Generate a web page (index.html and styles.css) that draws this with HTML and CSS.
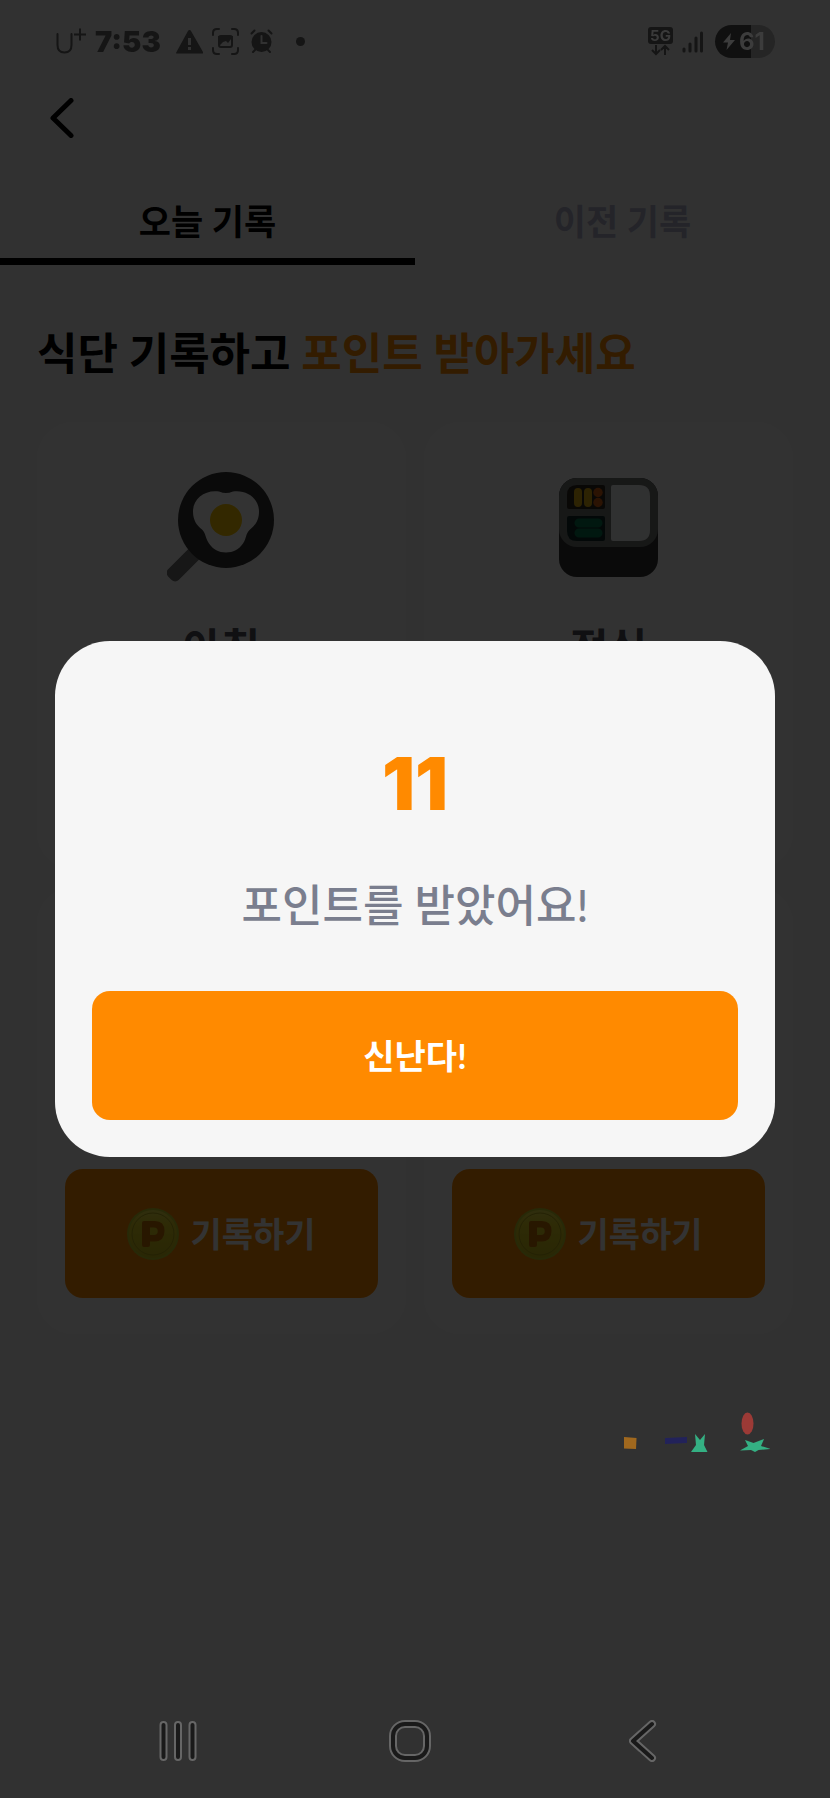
FILE: index.html
```html
<!DOCTYPE html>
<html lang="ko">
<head>
<meta charset="utf-8">
<meta name="viewport" content="width=device-width, initial-scale=1">
<title>식단 기록</title>
<link rel="stylesheet" href="styles.css">
</head>
<body>
<svg class="defs" width="0" height="0" aria-hidden="true">
  <defs>
    <linearGradient id="coin-fill" x1="0" y1="0" x2="0" y2="1">
      <stop offset="0" stop-color="#ece448"/>
      <stop offset="0.3" stop-color="#e4d420"/>
      <stop offset="1" stop-color="#ccc018"/>
    </linearGradient>
    <symbol id="coin" viewBox="0 0 52 52">
      <circle cx="26" cy="26" r="26" fill="#c4cc28"/>
      <circle cx="26" cy="26" r="24" fill="url(#coin-fill)"/>
      <circle cx="26" cy="26" r="21" fill="none" stroke="#b4a818" stroke-width="1"/>
      <path fill="#c87400" fill-rule="evenodd" d="M17 13h11q9.500 0 9.500 10T28 33.500h-5V37q0 2-2 2h-4q-2 0-2-2V15q0-2 2-2zM23 19.500v7.500h4a3.700 3.700 0 0 0 0-7.500z"/>
    </symbol>
  </defs>
</svg>

<div class="screen">
  <div class="status">
    <div class="status-side">
      <svg width="31" height="36" viewBox="0 0 31 36" fill="none" stroke="currentColor" aria-label="U+">
        <path stroke-width="2" stroke-linecap="round" d="M2.500 10v11q0 7.500 7 7.500t7-7.500V10"/>
        <path stroke-width="2" d="M19 10.500h12M25 4.500v12"/>
      </svg>
      <span class="clock">7:53</span>
      <svg width="27" height="24" viewBox="0 0 27 24" aria-hidden="true">
        <path fill="currentColor" d="M13.500 0q1 0 1.500 1l12 21q.5 1.500-1 1.500H1Q-.5 23.500.5 22L12 1q.5-1 1.500-1z"/>
        <path stroke="#313131" stroke-width="3" d="M13.500 8v7M13.500 17v3"/>
      </svg>
      <svg class="capture" width="27" height="27" viewBox="0 0 27 27" fill="none" stroke="currentColor" stroke-width="2" stroke-linecap="round" aria-hidden="true">
        <path d="M1 7V5q0-4 4-4h2M20 1h2q4 0 4 4v2M26 20v2q0 4-4 4h-2M7 26H5q-4 0-4-4v-2"/>
        <rect x="7" y="8" width="13" height="11" rx="2"/>
        <path fill="currentColor" stroke="none" d="M6 8h15v5l-2-2-3 4-2-2-3 1-3 3H6z"/>
      </svg>
      <svg class="alarm" width="23" height="25" viewBox="0 0 23 25" fill="none" stroke="currentColor" stroke-width="2" stroke-linecap="round" aria-hidden="true">
        <circle cx="11.500" cy="13" r="10" fill="currentColor" stroke="none"/>
        <path d="M1.500 4.500l3-3M21.500 4.500l-3-3M5 21l-2 2M18 21l2 2"/>
        <path d="M11.500 7v7h5" stroke="#313131"/>
      </svg>
      <svg width="9" height="9" viewBox="0 0 9 9" aria-hidden="true"><circle cx="4.500" cy="4.500" r="4.500" fill="currentColor"/></svg>
    </div>
    <div class="status-side">
      <svg width="25" height="30" viewBox="0 0 25 30" aria-label="5G">
        <rect width="25" height="17" rx="3" fill="currentColor"/>
        <text class="net" x="12.500" y="14" text-anchor="middle">5G</text>
        <path d="M8 18v9M4 23l4 4 4-4M17 28v-9M13 23l4-4 4 4" fill="none" stroke="currentColor" stroke-width="2"/>
      </svg>
      <svg class="signal" width="21" height="22" viewBox="0 0 21 22" stroke="currentColor" stroke-width="3" stroke-linecap="round" aria-hidden="true">
        <path d="M2 18v2M8 13v7M14 7v13M19.500 2v18"/>
      </svg>
      <div class="battery">
        <svg width="12" height="17" viewBox="0 0 12 17" aria-hidden="true"><path fill="currentColor" d="M8 0L0 9.500h5L3.500 17 12 7H7z"/></svg>
        <span>61</span>
      </div>
    </div>
  </div>

  <header class="topbar">
    <button class="back" type="button" aria-label="뒤로">
      <svg width="24" height="40" viewBox="0 0 24 40" fill="none" stroke="currentColor" stroke-width="5" stroke-linecap="round" stroke-linejoin="round"><path d="M21 2.500L3 20l18 17.500"/></svg>
    </button>
  </header>

  <nav class="tabs" role="tablist">
    <button class="tab tab-active" type="button" role="tab" aria-selected="true">오늘 기록</button>
    <button class="tab" type="button" role="tab" aria-selected="false">이전 기록</button>
  </nav>

  <main class="content">
    <h1 class="headline">식단 기록하고 <em>포인트 받아가세요</em></h1>
    <div class="meals">
      <section class="meal">
        <svg width="110" height="110" viewBox="1 0 110 110" aria-hidden="true">
          <rect x="-8" y="-7.500" width="45" height="15" rx="5" fill="#747474" transform="translate(30 80) rotate(135)"/>
          <circle cx="60" cy="48" r="48" fill="#343434"/>
          <path fill="#fff" d="M60 21q3 0 7-1.500c14-2 26 7 26 20 0 9-4 14-9 18-5 5-3 8-7 14-4 6-10 9-17 9s-13-3-17-9c-4-6-3-10-7-14-5-4-9-9-9-18 0-13 12-22 26-20q4 1.500 7 1.500z"/>
          <circle cx="60" cy="48" r="16" fill="#ffc800"/>
        </svg>
        <h2 class="meal-name">아침</h2>
        <button class="record" type="button"><svg width="52" height="52" aria-hidden="true"><use href="#coin"/></svg>기록하기</button>
      </section>
      <section class="meal">
        <svg width="110" height="110" viewBox="1 0 110 110" aria-hidden="true">
          <rect x="6" y="6" width="99" height="99" rx="18" fill="#343434"/>
          <rect x="6" y="6" width="99" height="69" rx="18" fill="#747776"/>
          <path fill="#302820" d="M24 13h26q2 0 2 2v20q0 2-2 2H16q-2 0-2-2V23q0-10 10-10z"/>
          <path fill="#102c28" d="M16 44h34q2 0 2 2v21q0 2-2 2H24q-10 0-10-10V46q0-2 2-2z"/>
          <path fill="#f0f2f2" d="M60 13h26q11 0 11 11v34q0 11-11 11H60q-2 0-2-2V15q0-2 2-2z"/>
          <path stroke="#e0b010" stroke-width="8" stroke-linecap="round" d="M25 20v11M35 20v11"/>
          <circle cx="45" cy="20.500" r="4.700" fill="#d86010"/>
          <circle cx="45" cy="30.500" r="4.700" fill="#d86010"/>
          <path stroke="#087850" stroke-width="9" stroke-linecap="round" d="M26 51h19M26 61h19"/>
        </svg>
        <h2 class="meal-name">점심</h2>
        <button class="record" type="button"><svg width="52" height="52" aria-hidden="true"><use href="#coin"/></svg>기록하기</button>
      </section>
      <section class="meal">
        <button class="record" type="button"><svg width="52" height="52" aria-hidden="true"><use href="#coin"/></svg>기록하기</button>
      </section>
      <section class="meal">
        <button class="record" type="button"><svg width="52" height="52" aria-hidden="true"><use href="#coin"/></svg>기록하기</button>
      </section>
    </div>
  </main>

  <div class="sysnav">
    <button type="button" aria-label="최근 앱">
      <svg width="38" height="48" viewBox="0 0 38 48" fill="none" stroke-linecap="round">
        <path class="edge" d="M4.500 8v32M19 8v32M33.500 8v32"/><path class="core" d="M4.500 8v32M19 8v32M33.500 8v32"/>
      </svg>
    </button>
    <button type="button" aria-label="홈">
      <svg width="42" height="42" viewBox="0 0 42 42" fill="none">
        <rect class="edge" x="4" y="4" width="34" height="34" rx="12"/><rect class="core" x="4" y="4" width="34" height="34" rx="12"/>
      </svg>
    </button>
    <button type="button" aria-label="뒤로 가기">
      <svg width="28" height="42" viewBox="0 0 28 42" fill="none" stroke-linecap="round" stroke-linejoin="round">
        <path class="edge" d="M23 4L4 21l19 17"/><path class="core" d="M23 4L4 21l19 17"/>
      </svg>
    </button>
  </div>
</div>

<div class="scrim">
  <svg class="confetti" width="150" height="44" viewBox="620 1410 150 44" aria-hidden="true">
    <path fill="#a0681e" d="M624 1437l12.500 1-.5 11-12-.5z"/>
    <path fill="#22225a" d="M665 1438l22-1v6l-22 1z"/>
    <path fill="#34b083" d="M695 1434l5 6 5-6-1 11 3.500 7H691l5-7z"/>
    <path fill="#34b083" d="M745 1440l8.500 3 10.500-4-3 7 9.500 3-12 1-3.500 2-4-2-11 .5 8-4.500z"/>
    <ellipse cx="747.500" cy="1423.500" rx="6" ry="11" fill="#9c3a36"/>
  </svg>
  <dialog class="reward" open aria-labelledby="reward-text">
    <strong class="reward-points">11</strong>
    <p class="reward-text" id="reward-text">포인트를 받았어요!</p>
    <button class="reward-close" type="button">신난다!</button>
  </dialog>
</div>
</body>
</html>
```

FILE: styles.css
```css
* {
  box-sizing: border-box;
}

body {
  margin: 0;
  background: #f6f6f6;
  color: #000;
  font-family: Lato, "Noto Sans CJK KR", sans-serif;
}

button {
  margin: 0;
  padding: 0;
  border: 0;
  background: none;
  color: inherit;
  font: inherit;
}

svg {
  display: block;
  flex: none;
}

.defs {
  position: absolute;
}

.screen {
  display: flex;
  flex-direction: column;
  min-height: 100vh;
}

/* System status bar */

.status {
  position: relative;
  z-index: 2;
  display: flex;
  justify-content: space-between;
  height: 83px;
  padding: 0 55px;
  color: #151515;
  font-family: Inter, sans-serif;
}

.status-side {
  display: flex;
  align-items: center;
  height: 83px;
}

.clock {
  margin: 0 15px 0 9px;
  font-size: 29px;
  font-weight: 900;
}

.capture {
  margin: 0 11px 0 9px;
}

.alarm {
  margin-right: 23px;
}

.net {
  fill: #3a3a3a;
  font-size: 15px;
  font-weight: 700;
}

.signal {
  margin: 0 12px 0 9px;
}

.battery {
  display: flex;
  align-items: center;
  gap: 4px;
  width: 60px;
  height: 33px;
  padding-left: 8px;
  border-radius: 17px;
  background: linear-gradient(90deg, #101010 60%, #252525 60%);
  color: #3c3c3c;
  font-size: 24px;
  font-weight: 700;
}

/* Page */

.topbar {
  display: flex;
  align-items: center;
  height: 70px;
  padding: 0 50px;
}

.tabs {
  display: flex;
}

.tab {
  flex: 1;
  padding: 43px 0 12px;
  border-bottom: 7px solid transparent;
  color: #b2b4cc;
  font-size: 35px;
  font-weight: 700;
  line-height: 50px;
}

.tab-active {
  border-color: #000;
  color: #000;
}

.content {
  padding: 58px 37px;
}

.headline {
  margin: 0 0 39px;
  font-size: 44px;
  font-weight: 700;
  line-height: 60px;
}

.headline em {
  color: #ff8a00;
  font-style: normal;
}

.meals {
  display: grid;
  grid-template-columns: 1fr 1fr;
  gap: 18px;
}

.meal {
  display: flex;
  flex-direction: column;
  align-items: center;
  min-height: 447px;
  padding: 50px 28px 36px;
  border-radius: 37px;
  background: #fbfbfb;
}

.meal-name {
  margin: 36px 0 0;
  color: #50505c;
  font-size: 42px;
  line-height: 60px;
}

.record {
  display: flex;
  align-items: center;
  justify-content: center;
  gap: 11px;
  width: 100%;
  height: 129px;
  margin-top: auto;
  border-radius: 18px;
  background: #ff8a00;
  color: #fff;
  font-size: 34px;
  font-weight: 700;
  line-height: 50px;
}

/* System navigation */

.sysnav {
  position: relative;
  z-index: 2;
  display: grid;
  grid-template-columns: repeat(3, 1fr);
  height: 114px;
  margin-top: auto;
  padding: 0 71px 0 62px;
}

.sysnav button {
  display: grid;
  place-items: center;
}

.edge {
  stroke: #666;
  stroke-width: 8px;
}

.core {
  stroke: #1a1a1a;
  stroke-width: 4px;
}

/* Reward dialog */

.scrim {
  position: fixed;
  inset: 0;
  z-index: 1;
  display: flex;
  align-items: center;
  padding: 0 55px;
  background: rgba(0, 0, 0, 0.8);
}

.confetti {
  position: absolute;
  right: 60px;
  bottom: 344px;
}

.reward {
  position: static;
  display: flex;
  flex: 1;
  flex-direction: column;
  margin: 0;
  padding: 99px 37px 37px;
  border: 0;
  border-radius: 55px;
  background: #f6f6f6;
  text-align: center;
}

.reward-points {
  color: #ff8a00;
  font-family: Inter, sans-serif;
  font-size: 73px;
  font-weight: 900;
  line-height: 88px;
}

.reward-text {
  margin: 45px 0 54px;
  color: #7a7e8e;
  font-size: 44px;
  font-weight: 500;
  line-height: 64px;
}

.reward-close {
  height: 129px;
  border-radius: 18px;
  background: #ff8a00;
  color: #fff;
  font-size: 34px;
  font-weight: 700;
  line-height: 50px;
}
```
